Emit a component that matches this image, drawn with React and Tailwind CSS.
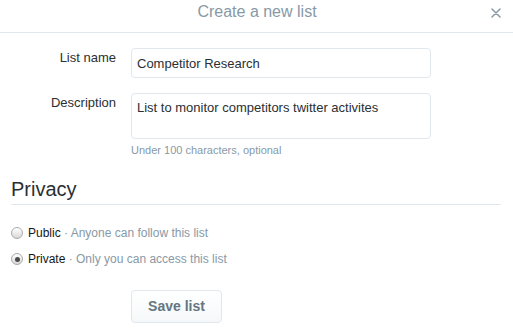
import React from "react";

function Radio({ checked }) {
  return (
    <span className="flex items-center justify-center w-[12px] h-[12px] rounded-full border border-[#a9a9a9] bg-gradient-to-b from-[#ffffff] to-[#d9d9d9] shrink-0">
      {checked && <span className="block w-[5px] h-[5px] rounded-full bg-[#4a4a4a]" />}
    </span>
  );
}

export default function App() {
  return (
    <div
      className="w-[513px] h-[334px] bg-white overflow-hidden text-[#292f33]"
      style={{ fontFamily: '"Liberation Sans", Arial, sans-serif' }}
    >
      <div className="grid grid-cols-[1fr_auto_1fr] h-[33px] border-b border-[#e1e8ed]">
        <div />
        <div className="text-[16px] leading-[24px] text-[#8899a6] pl-[1px]">Create a new list</div>
        <div className="flex justify-end pr-[12px] pt-[8px]">
          <svg width="10" height="10" viewBox="0 0 10 10" className="block">
            <path d="M1 1 L9 9 M9 1 L1 9" stroke="#8899a6" strokeWidth="1.5" strokeLinecap="round" />
          </svg>
        </div>
      </div>

      <div className="px-[11px]">
        <div className="flex items-start gap-[15px] mt-[15px]">
          <label className="w-[105px] text-right text-[13px] leading-[20px]">List name</label>
          <input
            readOnly
            defaultValue="Competitor Research"
            className="w-[300px] h-[30px] border border-[#e1e8ed] rounded-[4px] px-[5px] text-[13px] leading-[20px] text-[#292f33] outline-none"
          />
        </div>

        <div className="flex items-start gap-[15px] mt-[15px]">
          <label className="w-[105px] text-right text-[13px] leading-[20px]">Description</label>
          <div className="flex flex-col">
            <textarea
              readOnly
              defaultValue="List to monitor competitors twitter activites"
              className="w-[300px] h-[46px] border border-[#e1e8ed] rounded-[4px] px-[5px] pt-[4px] text-[13px] leading-[20px] text-[#292f33] resize-none outline-none overflow-hidden"
            />
            <div className="mt-[3px] text-[11px] leading-[16px] text-[#8899a6]">
              Under 100 characters, optional
            </div>
          </div>
        </div>

        <div className="mt-[19px] border-b border-[#e1e8ed] pb-[3px] w-[490px]">
          <div className="text-[20px] leading-[24px] text-[#292f33]">Privacy</div>
        </div>

        <div className="flex flex-col gap-[8px] mt-[19px]">
          <div className="flex items-center gap-[5px] h-[18px]">
            <Radio />
            <span className="text-[12px] leading-[18px]">
              <span className="text-[#14171a]">Public</span>
              <span className="text-[#8899a6]"> · Anyone can follow this list</span>
            </span>
          </div>
          <div className="flex items-center gap-[5px] h-[18px]">
            <Radio checked />
            <span className="text-[12px] leading-[18px]">
              <span className="text-[#14171a]">Private</span>
              <span className="text-[#8899a6]"> · Only you can access this list</span>
            </span>
          </div>
        </div>

        <div className="pl-[120px] mt-[22px]">
          <button className="w-[91px] h-[33px] rounded-[4px] border border-[#e1e8ed] bg-gradient-to-b from-[#ffffff] to-[#f5f8fa] text-[14px] font-bold text-[#66757f]">
            Save list
          </button>
        </div>
      </div>
    </div>
  );
}
